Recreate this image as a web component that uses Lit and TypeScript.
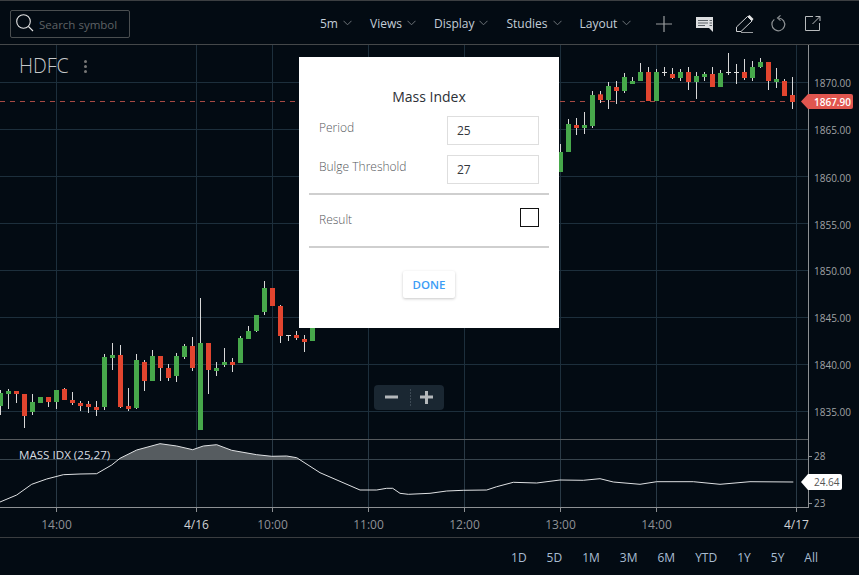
import { LitElement, html, css, svg } from "lit";
import { customElement } from "lit/decorators.js";

type C = [string, number, number, number, number];

const leftRaw: C[] = [
  ["g",369,408,360,435],["g",363,372,357,417],["r",363,372,363,399],["r",372,438,372,474],["g",396,426,372,435],
  ["g",381,399,381,399],["r",381,396,381,411],["g",360,396,360,417],["r",357,390,354,390],["r",390,399,366,405],
  ["r",399,408,393,423],["r",402,411,393,429],["r",411,420,393,438],["g",261,411,252,420],["g",255,264,219,300],
  ["r",255,411,225,414],["r",408,417,354,423],["g",270,414,252,417],["r",276,333,270,363],["g",258,333,240,333],
  ["r",258,294,258,333],["r",294,324,282,333],["g",258,318,249,336],["g",228,261,222,267],["r",228,294,201,303],
  ["g",219,480,84,480],["r",219,300,219,372],["g",294,303,276,318],["g",276,285,234,291],["r",276,285,264,306],
  ["g",204,279,198,279],["g",183,207,168,207],["g",135,183,135,186],["g",54,126,33,135],["r",54,108,54,108],
  ["r",108,198,105,219],["d",195,198,195,213],["r",195,204,183,210],["r",207,216,195,246],["g",174,213,174,213],
];
const rightRaw: C[] = [
  ["g",321,381,297,381],["g",237,321,222,321],["r",240,249,219,270],["g",240,249,201,267],["g",150,243,138,249],
  ["r",148,165,138,174],["g",123,165,111,192],["r",126,138,108,177],["g",96,138,84,144],["g",108,117,96,117],
  ["g",81,108,54,108],["r",81,168,66,168],["g",81,168,72,168],["d",81,84,66,93],["r",87,99,69,102],
  ["g",81,99,72,108],["r",81,111,66,135],["g",93,111,81,162],["g",87,96,81,108],["r",87,126,66,126],
  ["g",84,126,75,126],["d",81,84,24,90],["d",81,84,57,117],["r",81,99,42,105],["g",66,99,48,108],
  ["g",51,66,39,69],["r",51,108,51,135],["g",102,111,69,129],["r",108,153,102,153],["r",150,171,96,192],
];

const VX = [56, 196, 272, 368, 464, 560, 656, 796];
const HY: [number, string, number][] = [
  [82, "1870.00", 83],[129, "1865.00", 130],[176, "1860.00", 178],[223, "1855.00", 225],
  [270, "1850.00", 271],[317, "1845.00", 318],[364, "1840.00", 365],[411, "1835.00", 412],
];
const XL: [number, string, boolean][] = [
  [56,"14:00",false],[196,"4/16",true],[272,"10:00",false],[368,"11:00",false],
  [464,"12:00",false],[560,"13:00",false],[656,"14:00",false],[796,"4/17",true],
];
const lineA = [[0,216],[50,195],[95,163],[140,147],[190,134],[240,132],[290,131],[335,105],[360,85],[410,60],[480,41],[530,48],[578,59],[610,48],[650,44],[695,61],[770,74],[815,79],[860,78],[890,83],[960,128],[1080,180],[1130,180],[1160,175],[1178,175],[1200,190],[1225,193],[1290,190]];
const lineB = [[50,183],[100,181],[170,180],[200,170],[250,157],[320,159],[390,150],[460,151],[510,146],[550,156],[630,163],[680,155],[790,155],[870,163],[960,155],[1090,156]];
const pts = [
  ...lineA.map(([x, y]) => [x / 3, 430 + y / 3]),
  ...lineB.map(([x, y]) => [430 + x / 3, 430 + y / 3]),
];
const linePts = pts.map((p) => p.map((n) => n.toFixed(1)).join(",")).join(" ");
const fillPts =
  "116.5,460 " +
  lineA.filter(([x]) => x >= 360 && x <= 890).map(([x, y]) => `${(x / 3).toFixed(1)},${(430 + y / 3).toFixed(1)}`).join(" ") +
  " 299,460";

function candle(c: C, cx: number, base: number) {
  const [k, bt, bb, wt, wb] = c;
  const y = (v: number) => base + v / 3;
  const col = k === "g" ? "#47a84b" : k === "r" ? "#e2452f" : "#dddddd";
  return svg`
    <rect x=${cx - 0.5} y=${y(wt)} width="1" height=${(wb - wt) / 3} fill="#d8d8d8"></rect>
    ${k === "d"
      ? svg`<rect x=${cx - 2.5} y=${y(bt)} width="5" height="1" fill=${col}></rect>`
      : svg`<rect x=${cx - 2.5} y=${y(bt)} width="5" height=${(bb - bt) / 3} fill=${col}></rect>`}
  `;
}

@customElement("app-root")
export class AppRoot extends LitElement {
  static styles = css`
    :host {
      display: block;
      width: 859px;
      height: 575px;
      position: relative;
      overflow: hidden;
      background: #030b13;
      font-family: "Open Sans", "Liberation Sans", sans-serif;
      color: #c4ced8;
    }
    .header {
      display: flex;
      align-items: center;
      box-sizing: border-box;
      height: 45px;
      border-top: 1px solid #3c3f42;
      border-bottom: 1px solid #45484a;
      padding: 3px 0 0 10px;
    }
    .search {
      display: flex;
      align-items: center;
      gap: 2px;
      box-sizing: border-box;
      width: 120px;
      height: 28px;
      padding-left: 5px;
      border: 1px solid #4a4e50;
      border-radius: 2px;
      font-size: 11.5px;
      color: #5f6265;
    }
    .search svg { flex: none; }
    .menu {
      display: flex;
      align-items: center;
      gap: 18px;
      margin: 0 0 2px 190px;
      font-size: 12px;
    }
    .mi { display: flex; align-items: center; gap: 5px; }
    .tools { display: block; margin-left: 19px; flex: none; }
    .pane { display: block; }
    .bottom-row {
      display: flex;
      justify-content: flex-end;
      align-items: center;
      gap: 20px;
      height: 37px;
      padding: 1px 41px 0 0;
      box-sizing: border-box;
      font-size: 12px;
      color: #a9bdd2;
    }
    .axis { font: 12px "Open Sans", sans-serif; fill: #8f9296; }
    .axis.hi { fill: #d0d2d4; }
    .axis.y { font-size: 10px; fill: #a0a3a6; }
    .tag { font: 600 10px "Open Sans", sans-serif; fill: #ffffff; }
    .tag2 { font: 10px "Open Sans", sans-serif; fill: #555; }
    .ind { font: 11.6px "Open Sans", sans-serif; fill: #d8dde2; }
    .legend {
      position: absolute;
      left: 19px;
      top: 52px;
      display: flex;
      align-items: center;
      gap: 15px;
      font-size: 19.5px;
      font-weight: 300;
      color: #c6c8ca;
      line-height: 28px;
    }
    .dots { display: flex; flex-direction: column; gap: 2px; }
    .dots i { display: block; width: 3px; height: 3px; border-radius: 50%; background: #777; }
    .zoomer {
      position: absolute;
      left: 374px;
      top: 385px;
      width: 70px;
      height: 25px;
      display: flex;
      align-items: center;
      background: #1a2732;
      border-radius: 4px;
    }
    .zoomer svg { display: block; }
    .modal {
      position: absolute;
      left: 299px;
      top: 57px;
      width: 260px;
      height: 271px;
      box-sizing: border-box;
      background: #fff;
      padding: 31px 10px 0;
      display: flex;
      flex-direction: column;
      color: #55595d;
    }
    .title {
      text-align: center;
      font-size: 14px;
      line-height: 18px;
      color: #2c3036;
      margin-bottom: 10px;
    }
    .row {
      display: flex;
      justify-content: space-between;
      padding: 0 10px;
      font-size: 12px;
      font-weight: 300;
      margin-bottom: 10px;
      line-height: 24px;
    }
    .field {
      box-sizing: border-box;
      width: 92px;
      height: 29px;
      border: 1px solid #dedede;
      padding-left: 9px;
      font-size: 12px;
      font-weight: 400;
      line-height: 28px;
      color: #33383d;
    }
    .rule { margin-top: -1px; }
    hr { width: 100%; margin: 0; border: 0; height: 2px; background: #cfcfcf; flex: none; }
    .result {
      display: flex;
      justify-content: space-between;
      align-items: flex-start;
      box-sizing: border-box;
      height: 51px;
      padding: 13px 10px 0;
      font-size: 12px;
      font-weight: 300;
      line-height: 24px;
    }
    .check { box-sizing: border-box; width: 19px; height: 19px; border: 1px solid #111; }
    .done {
      align-self: center;
      margin-top: 23px;
      width: 52px;
      height: 27px;
      line-height: 28px;
      text-align: center;
      font-size: 11.5px;
      font-weight: 600;
      color: #3b9cf5;
      border-radius: 2px;
      box-shadow: 0 1px 3px rgba(0, 0, 0, 0.22);
    }
  `;

  render() {
    return html`
      <div class="header">
        <div class="search">
          <svg width="21" height="22" viewBox="0 0 21 22">
            <circle cx="7.5" cy="8.5" r="6.8" fill="none" stroke="#e4e4e4" stroke-width="1.1"></circle>
            <path d="M12.5 13.5 L17 18" stroke="#e4e4e4" stroke-width="1.1" fill="none"></path>
          </svg>
          <span>Search symbol</span>
        </div>
        <div class="menu">
          ${["5m", "Views", "Display", "Studies", "Layout"].map(
            (t) => html`<div class="mi"><span>${t}</span>
              <svg width="9" height="6" viewBox="0 0 9 6"><path d="M0.5 0.8 L4.5 4.8 L8.5 0.8" fill="none" stroke="#6d7378" stroke-width="1"></path></svg>
            </div>`
          )}
        </div>
        <svg class="tools" width="176" height="28" viewBox="650 10 176 28">
          <path d="M656 24 H672 M664 16 V32" stroke="#9b9ea0" stroke-width="1.2" fill="none"></path>
          <path d="M696 17 H713 V32 L709 28 H696 Z" fill="#dcdee0"></path>
          <path d="M698 20.5 H708 M698 23 H708 M698 25.5 H705 M709.5 20.5 H712 M709.5 23 H712 M709.5 25.5 H712" stroke="#5a6066" stroke-width="1" fill="none"></path>
          <path d="M736.5 31.5 V27 L747.5 16.5 L752 21 L741 31.5 Z" fill="none" stroke="#cfd1d3" stroke-width="1"></path>
          <path d="M747.5 16.5 L749.5 15 L753.5 19 L752 21 Z" fill="#e2e3e4"></path>
          <path d="M741 32.5 H753" stroke="#9a9da0" stroke-width="1"></path>
          <path d="M774.3 19.4 A6.4 6.4 0 1 0 778.7 18" fill="none" stroke="#8f9396" stroke-width="1.2"></path>
          <path d="M780.5 15.3 L777.5 18 L780.5 20.6" fill="none" stroke="#8f9396" stroke-width="1.1"></path>
          <path d="M813 16.5 H805.5 V30.5 H819.5 V23" fill="none" stroke="#b8bbbd" stroke-width="1"></path>
          <path d="M812.5 24 L820 16.5 M815.5 16.5 H820 V21" fill="none" stroke="#b8bbbd" stroke-width="1"></path>
        </svg>
      </div>

      <svg class="pane" width="859" height="395" viewBox="0 45 859 395">
        ${VX.map((x) => svg`<rect x=${x} y="45" width="1" height="394" fill="#1d2f3c"></rect>`)}
        ${HY.map(([y]) => svg`<rect x="0" y=${y} width="808" height="1" fill="#1d2f3c"></rect>`)}
        <path d="M0 101.5 H800" stroke="#a84a44" stroke-width="1" stroke-dasharray="5 5"></path>
        ${leftRaw.map((c, i) => candle(c, 0.5 + 8 * i, 270))}
        ${rightRaw.map((c, i) => candle(c, 0.5 + 8 * (70 + i), 45))}
        <rect x="808" y="45" width="1" height="395" fill="#8d9093"></rect>
        <rect x="0" y="439" width="808" height="1" fill="#565a5d"></rect>
        ${HY.map(([y, t, ty]) => svg`
          <text class="axis y" x="814" y=${ty + 4}>${t}</text>
        `)}
        <path d="M801 101.5 L808 94 H851 Q853 94 853 96 V107 Q853 109 851 109 H808 Z" fill="#e0564f"></path>
        <text class="tag" x="814" y="105.5">1867.90</text>
      </svg>

      <svg class="pane" width="859" height="98" viewBox="0 440 859 98">
        ${VX.map((x) => svg`<rect x=${x} y="440" width="1" height="67" fill="#2a3a46"></rect>`)}
        <rect x="0" y="459" width="808" height="1" fill="#37444d"></rect>
        <polygon points=${fillPts} fill="#565c60"></polygon>
        <polyline points=${linePts} fill="none" stroke="#dfe1e3" stroke-width="1"></polyline>
        <text class="ind" x="19" y="459">MASS IDX (25,27)</text>
        <rect x="808" y="440" width="1" height="68" fill="#8d9093"></rect>
        <rect x="0" y="507" width="809" height="1" fill="#8d9093"></rect>
        <rect x="0" y="537" width="859" height="1" fill="#3a3d40"></rect>
        <rect x="809" y="456" width="3" height="1" fill="#8d9093"></rect>
        <rect x="809" y="503" width="3" height="1" fill="#8d9093"></rect>
        ${VX.map((x) => svg`<rect x=${x} y="508" width="1" height="4" fill="#8d9093"></rect>`)}
        <text class="axis y" x="814" y="460">28</text>
        <text class="axis y" x="814" y="507">23</text>
        ${XL.map(([x, t, hi]) => svg`<text class="axis ${hi ? "hi" : ""}" x=${x + 0.5} y="528.5" text-anchor="middle">${t}</text>`)}
        <path d="M801 482 L808 474 H840 Q842 474 842 476 V488 Q842 490 840 490 H808 Z" fill="#ffffff"></path>
        <text class="tag2" x="814" y="486">24.64</text>
      </svg>

      <div class="bottom-row">
        ${["1D", "5D", "1M", "3M", "6M", "YTD", "1Y", "5Y", "All"].map((t) => html`<span>${t}</span>`)}
      </div>

      <div class="legend"><span>HDFC</span><div class="dots"><i></i><i></i><i></i></div></div>

      <div class="zoomer">
        <svg width="70" height="25" viewBox="0 0 70 25">
          <rect x="11" y="10.5" width="13" height="3" fill="#b4b8bb"></rect>
          <path d="M36.5 4 V21" stroke="#3d4a55" stroke-dasharray="2 1"></path>
          <path d="M46 10.5 H59 V13.5 H46 Z M51 6 H54 V19 H51 Z" fill="#b4b8bb"></path>
        </svg>
      </div>

      <div class="modal">
        <div class="title">Mass Index</div>
        <div class="row"><span>Period</span><div class="field">25</div></div>
        <div class="row"><span>Bulge Threshold</span><div class="field">27</div></div>
        <hr class="rule" />
        <div class="result"><span>Result</span><div class="check"></div></div>
        <hr />
        <div class="done">DONE</div>
      </div>
    `;
  }
}
